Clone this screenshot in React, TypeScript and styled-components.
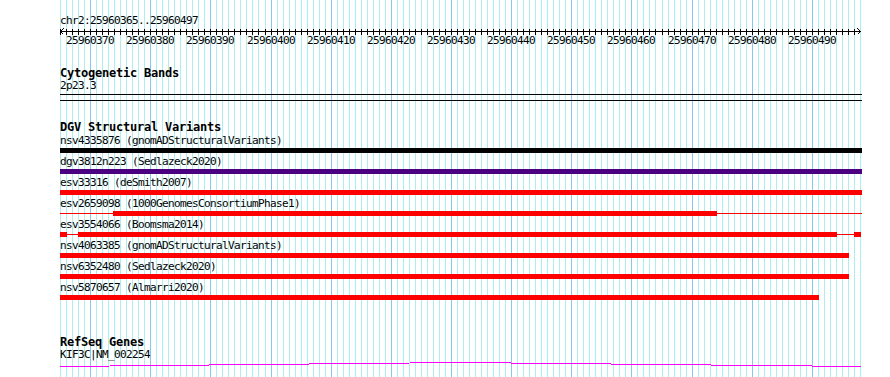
import React from 'react';
import styled, { createGlobalStyle } from 'styled-components';

// view window
const START = 25960365;
const END = 25960497;
const PAD = 60;
const TRACK_W = 800;
const SCALE = TRACK_W / (END - START + 1);
const bpX = (i: number) => Math.round(i * SCALE);

const GlobalStyle = createGlobalStyle`
  html, body { margin: 0; padding: 0; background: #ffffff; }
  body { font-family: "DejaVu Sans Mono", "Liberation Mono", monospace; }
`;

const Page = styled.div`
  position: relative;
  width: 890px;
  height: 377px;
  overflow: hidden;
  background: #ffffff;
`;

const GridLayer = styled.svg`
  position: absolute;
  left: 0;
  top: 0;
  z-index: 0;
`;

const Panel = styled.div`
  position: relative;
  z-index: 1;
  display: flex;
  flex-direction: column;
  padding-left: ${PAD}px;
  width: 802px;
`;

const Label = styled.div<{ $top?: number }>`
  height: 13px;
  line-height: 13px;
  margin-top: ${p => p.$top ?? 0}px;
  font-family: "DejaVu Sans Mono", "Liberation Mono", monospace;
  font-size: 11px;
  letter-spacing: -0.62px;
  white-space: nowrap;
  color: #000000;
`;

const TrackTitle = styled.div<{ $top: number }>`
  height: 12px;
  line-height: 12px;
  margin-top: ${p => p.$top}px;
  font-family: "DejaVu Sans Mono", "Liberation Mono", monospace;
  font-size: 12px;
  font-weight: bold;
  letter-spacing: -0.22px;
  white-space: nowrap;
  color: #000000;
`;

const Glyph = styled.svg<{ $top?: number }>`
  display: block;
  overflow: visible;
  margin-top: ${p => p.$top ?? 0}px;
`;

const FeatureRow = styled.div`
  display: flex;
  flex-direction: column;
  gap: 1px;
  padding-bottom: 2px;
`;

const RulerText = styled.text`
  font-family: "DejaVu Sans Mono", "Liberation Mono", monospace;
  font-size: 11px;
  letter-spacing: -0.62px;
  fill: #000000;
`;

type Seg = { from: number; to: number; thin?: boolean };
type Variant = { name: string; color: string; segs: Seg[] };

const variants: Variant[] = [
  { name: 'nsv4335876 (gnomADStructuralVariants)', color: '#000000', segs: [{ from: 0, to: 802 }] },
  { name: 'dgv3812n223 (Sedlazeck2020)', color: '#4b0082', segs: [{ from: 0, to: 802 }] },
  { name: 'esv33316 (deSmith2007)', color: '#ff0000', segs: [{ from: 0, to: 802 }] },
  {
    name: 'esv2659098 (1000GenomesConsortiumPhase1)',
    color: '#ff0000',
    segs: [{ from: 0, to: 802, thin: true }, { from: 53, to: 657 }],
  },
  {
    name: 'esv3554066 (Boomsma2014)',
    color: '#ff0000',
    segs: [
      { from: 0, to: 7 },
      { from: 7, to: 18, thin: true },
      { from: 18, to: 777 },
      { from: 777, to: 794, thin: true },
      { from: 794, to: 801 },
    ],
  },
  { name: 'nsv4063385 (gnomADStructuralVariants)', color: '#ff0000', segs: [{ from: 0, to: 789 }] },
  { name: 'nsv6352480 (Sedlazeck2020)', color: '#ff0000', segs: [{ from: 0, to: 789 }] },
  { name: 'nsv5870657 (Almarri2020)', color: '#ff0000', segs: [{ from: 0, to: 759 }] },
];

function Grid() {
  const lines = [];
  for (let i = 0; i <= END - START + 1; i++) {
    const major = (START + i) % 10 === 0;
    lines.push(
      <rect key={i} x={PAD + bpX(i)} y={0} width={1} height={377} fill={major ? '#87c8ee' : '#afeeee'} />
    );
  }
  return (
    <GridLayer width={890} height={377} shapeRendering="crispEdges">
      {lines}
    </GridLayer>
  );
}

function Ruler() {
  const ticks = [];
  const labels = [];
  for (let i = 0; i <= END - START; i++) {
    const x = bpX(i);
    ticks.push(<rect key={i} x={x} y={2} width={1} height={6} fill="#000" />);
    if ((START + i) % 10 === 0) {
      labels.push(
        <RulerText key={i} x={x - 24} y={17}>
          {START + i}
        </RulerText>
      );
    }
  }
  return (
    <Glyph width={802} height={20} shapeRendering="crispEdges">
      <rect x={0} y={4} width={801} height={1} fill="#000" />
      {ticks}
      <polyline points="3.5,1.5 0.5,4.5 3.5,7.5" fill="none" stroke="#000" />
      <polyline points="797.5,1.5 800.5,4.5 797.5,7.5" fill="none" stroke="#000" />
      {labels}
    </Glyph>
  );
}

function VariantBar({ v }: { v: Variant }) {
  return (
    <Glyph width={802} height={5} shapeRendering="crispEdges">
      {v.segs.map((s, i) => (
        <rect
          key={i}
          x={s.from}
          y={s.thin ? 2 : 0}
          width={s.to - s.from}
          height={s.thin ? 1 : 5}
          fill={v.color}
        />
      ))}
    </Glyph>
  );
}

export default function App() {
  return (
    <Page>
      <GlobalStyle />
      <Grid />
      <Panel>
        <Label $top={14}>chr2:{START}..{END}</Label>
        <Ruler />

        <TrackTitle $top={20}>Cytogenetic Bands</TrackTitle>
        <Label>2p23.3</Label>
        <Glyph $top={2} width={802} height={7} shapeRendering="crispEdges">
          <rect x={0} y={0} width={802} height={1} fill="#000" />
          <rect x={0} y={6} width={802} height={1} fill="#000" />
        </Glyph>

        <TrackTitle $top={20}>DGV Structural Variants</TrackTitle>
        <FeatureRow style={{ marginTop: 1 }}>
          <Label>{variants[0].name}</Label>
          <VariantBar v={variants[0]} />
        </FeatureRow>
        {variants.slice(1).map(v => (
          <FeatureRow key={v.name}>
            <Label>{v.name}</Label>
            <VariantBar v={v} />
          </FeatureRow>
        ))}

        <TrackTitle $top={34}>RefSeq Genes</TrackTitle>
        <Label>KIF3C|NM_002254</Label>
        <Glyph width={802} height={7} shapeRendering="crispEdges">
          <polyline points="0,5.5 400,1.5 801,5.5" fill="none" stroke="#ff00ff" strokeWidth={1} />
        </Glyph>
      </Panel>
    </Page>
  );
}
